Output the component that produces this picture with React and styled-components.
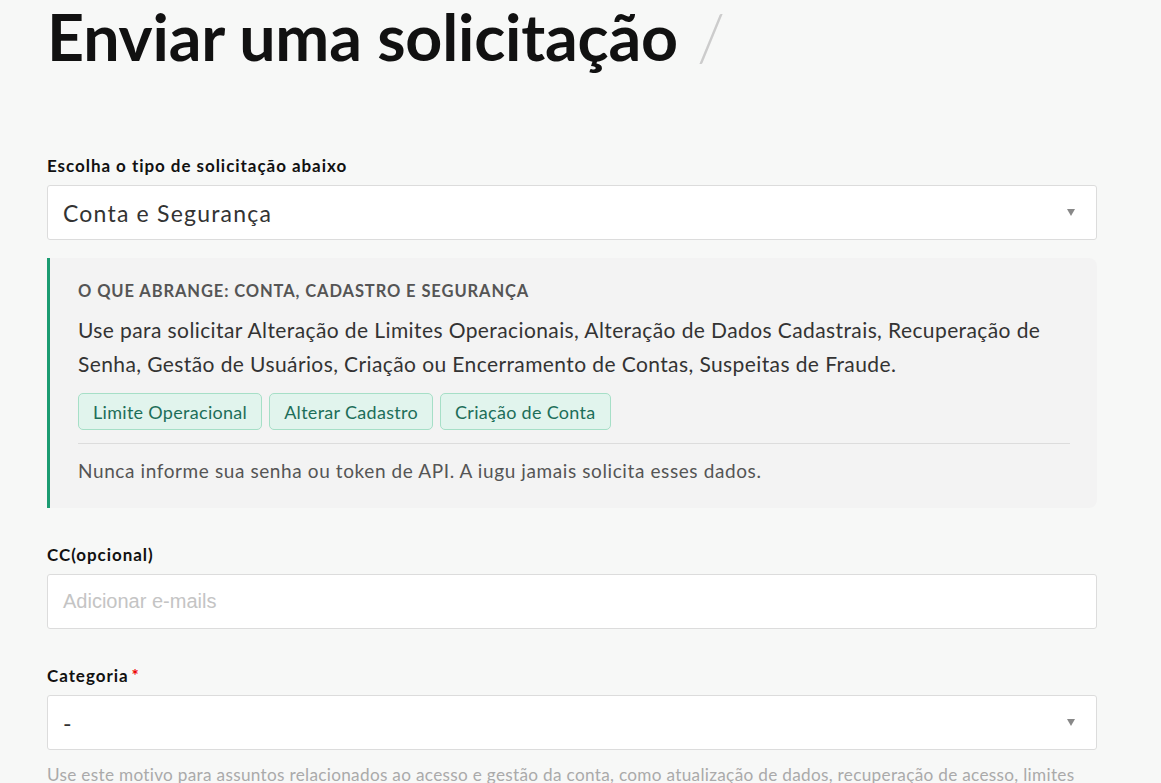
import styled, { createGlobalStyle } from "styled-components";

const GlobalStyle = createGlobalStyle`
  html, body {
    margin: 0;
    padding: 0;
    background: #f7f8f7;
    font-family: Lato, "Noto Sans", sans-serif;
    color: #222;
  }
  * { box-sizing: border-box; }
`;

const Page = styled.div`
  width: 1050px;
  margin-left: 47px;
  overflow: hidden;
  height: 783px;
`;

const Title = styled.h1`
  margin: 0;
  display: flex;
  align-items: baseline;
  gap: 19px;
  font-size: 64.5px;
  line-height: 72px;
  font-weight: 700;
  color: #111;
  letter-spacing: -0.2px;
`;

const Slash = styled.span`
  font-weight: 300;
  color: #ccc;
`;

const Field = styled.div`
  display: flex;
  flex-direction: column;
  margin-top: ${(p) => p.$top || 0}px;
`;

const Label = styled.label`
  font-size: 17px;
  font-weight: 700;
  letter-spacing: 0.95px;
  color: #111;
  line-height: 22px;
  margin-bottom: 8px;
`;

const Required = styled.span`
  color: #e00;
  margin-left: 3px;
`;

const Box = styled.div`
  height: 55px;
  background: #fff;
  border: 1px solid #dcdcdc;
  border-radius: 3px;
  display: flex;
  align-items: center;
  justify-content: space-between;
  padding: 0 21px 0 15px;
`;

const Value = styled.span`
  font-size: 23px;
  letter-spacing: 1.2px;
  color: #333;
  font-weight: 400;
`;

const Placeholder = styled.span`
  font-family: "Liberation Sans", Arial, sans-serif;
  font-size: 20px;
  color: #c4c4c4;
`;

const Caret = styled.span`
  width: 0;
  height: 0;
  border-left: 4.5px solid transparent;
  border-right: 4.5px solid transparent;
  border-top: 7px solid #888;
`;

const Info = styled.section`
  margin-top: 18px;
  background: #f3f3f3;
  border-left: 3px solid #1c9c72;
  border-radius: 0 8px 8px 0;
  padding: 24px 27px 26px 28px;
`;

const InfoTitle = styled.h3`
  margin: 0;
  font-size: 16.5px;
  font-weight: 700;
  letter-spacing: 0.9px;
  text-transform: uppercase;
  color: #555;
  line-height: 18px;
`;

const InfoText = styled.p`
  margin: 13px 0 0;
  font-size: 21px;
  letter-spacing: 0.4px;
  line-height: 34px;
  color: #333;
`;

const Tags = styled.div`
  display: flex;
  gap: 7px;
  margin-top: 12px;
  padding-bottom: 13px;
  border-bottom: 1px solid #dcdcdc;
`;

const Tag = styled.span`
  height: 37px;
  display: inline-flex;
  align-items: center;
  padding: 0 14px;
  background: #e1f4ed;
  border: 1px solid #a6dfc7;
  border-radius: 5px;
  font-size: 18px;
  letter-spacing: 0.3px;
  color: #1d6e59;
`;

const Note = styled.p`
  margin: 16px 0 0;
  font-size: 19px;
  letter-spacing: 0.6px;
  line-height: 22px;
  color: #555;
`;

const Help = styled.p`
  margin: 14px 0 0;
  font-size: 17.2px;
  letter-spacing: 0.3px;
  line-height: 22px;
  color: #aaa;
`;

const tags = ["Limite Operacional", "Alterar Cadastro", "Criação de Conta"];

export default function App() {
  return (
    <>
      <GlobalStyle />
      <Page>
        <Title>
          Enviar uma solicitação <Slash>/</Slash>
        </Title>

        <Field $top={83}>
          <Label>Escolha o tipo de solicitação abaixo</Label>
          <Box>
            <Value>Conta e Segurança</Value>
            <Caret />
          </Box>
        </Field>

        <Info>
          <InfoTitle>O que abrange: Conta, Cadastro e Segurança</InfoTitle>
          <InfoText>
            Use para solicitar Alteração de Limites Operacionais, Alteração de
            Dados Cadastrais, Recuperação de Senha, Gestão de Usuários, Criação
            ou Encerramento de Contas, Suspeitas de Fraude.
          </InfoText>
          <Tags>
            {tags.map((t) => (
              <Tag key={t}>{t}</Tag>
            ))}
          </Tags>
          <Note>
            Nunca informe sua senha ou token de API. A iugu jamais solicita
            esses dados.
          </Note>
        </Info>

        <Field $top={36}>
          <Label>CC(opcional)</Label>
          <Box>
            <Placeholder>Adicionar e-mails</Placeholder>
          </Box>
        </Field>

        <Field $top={36}>
          <Label>
            Categoria<Required>*</Required>
          </Label>
          <Box>
            <Value>-</Value>
            <Caret />
          </Box>
        </Field>

        <Help>
          Use este motivo para assuntos relacionados ao acesso e gestão da
          conta, como atualização de dados, recuperação de acesso, limites
          operacionais e segurança.
        </Help>
      </Page>
    </>
  );
}
